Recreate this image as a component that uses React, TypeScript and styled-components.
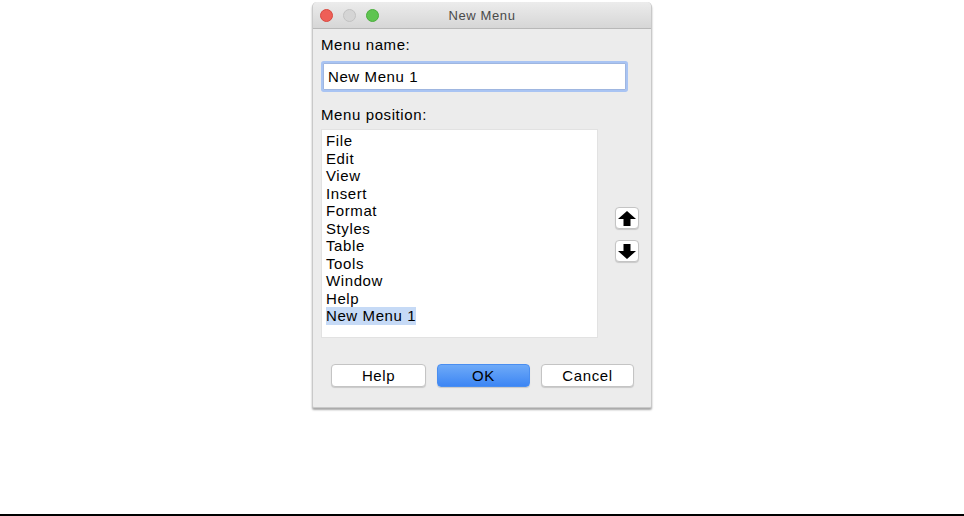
import styled, { createGlobalStyle } from "styled-components";

const GlobalStyle = createGlobalStyle`
    html, body {
        margin: 0;
        padding: 0;
        background: #fff;
    }
    body {
        font-family: "Liberation Sans", Arial, sans-serif;
    }
`;

const Page = styled.div`
    height: 516px;
    border-bottom: 2px solid #000;
    display: flex;
    flex-direction: column;
    align-items: center;
    padding-top: 2px;
    box-sizing: border-box;
    overflow: hidden;
`;

const Window = styled.div`
    width: 340px;
    height: 406px;
    flex-shrink: 0;
    background: #ececec;
    border: 1px solid #c9c9c9;
    border-top: none;
    border-radius: 5px 5px 2px 2px;
    box-sizing: border-box;
    display: flex;
    flex-direction: column;
    box-shadow: 0 2px 2px rgba(0, 0, 0, 0.35);
`;

const TitleBar = styled.div`
    height: 27px;
    flex-shrink: 0;
    display: flex;
    align-items: center;
    padding-left: 7px;
    position: relative;
    background: linear-gradient(#ececec, #d6d6d6);
    border-bottom: 1px solid #b8b8b8;
    border-radius: 5px 5px 0 0;
    box-sizing: border-box;
`;

const Dot = styled.span<{ $color: string; $edge: string }>`
    width: 13px;
    height: 13px;
    border-radius: 50%;
    background: ${(p) => p.$color};
    border: 1px solid ${(p) => p.$edge};
    box-sizing: border-box;
    margin-right: 10px;
`;

const Title = styled.div`
    position: absolute;
    left: 0;
    right: 0;
    text-align: center;
    font-size: 13px;
    letter-spacing: 0.6px;
    color: #4a4a4a;
    pointer-events: none;
`;

const Body = styled.div`
    flex: 1;
    display: flex;
    flex-direction: column;
    padding: 7px 12px 20px 8px;
`;

const Label = styled.div<{ $gap: number }>`
    font-size: 15px;
    letter-spacing: 0.6px;
    line-height: 17px;
    color: #000;
    margin-top: ${(p) => p.$gap}px;
`;

const NameInput = styled.div`
    margin: 10px 13px 0 2px;
    height: 27px;
    box-sizing: border-box;
    background: #fff;
    border: 1px solid #9fb6e0;
    box-shadow: 0 0 0 2px #a9c4f3;
    border-radius: 1px;
    display: flex;
    align-items: center;
    padding-left: 4px;
    font-size: 15px;
    letter-spacing: 0.6px;
    color: #000;
`;

const ListRow = styled.div`
    display: flex;
    align-items: center;
    margin-top: 6px;
`;

const List = styled.div`
    width: 277px;
    height: 209px;
    flex-shrink: 0;
    box-sizing: border-box;
    background: #fff;
    border: 1px solid #e2e2e2;
    padding: 2px 0 0 4px;
    display: flex;
    flex-direction: column;
    align-items: flex-start;
`;

const Item = styled.span<{ $selected?: boolean }>`
    font-size: 15px;
    letter-spacing: 0.6px;
    line-height: 17.5px;
    color: #000;
    background: ${(p) => (p.$selected ? "#c6daf6" : "transparent")};
`;

const ArrowColumn = styled.div`
    display: flex;
    flex-direction: column;
    gap: 11px;
    margin-left: 17px;
    margin-top: 2px;
`;

const ArrowButton = styled.div`
    width: 24px;
    height: 22px;
    box-sizing: border-box;
    background: #fff;
    border: 1px solid #c4c4c4;
    border-radius: 4px;
    box-shadow: 0 1px 1px rgba(0, 0, 0, 0.15);
    display: flex;
    align-items: center;
    justify-content: center;
`;

const ButtonRow = styled.div`
    margin-top: auto;
    display: flex;
    justify-content: space-between;
    padding: 0 5px 0 10px;
`;

const Button = styled.div<{ $primary?: boolean; $w: number }>`
    width: ${(p) => p.$w}px;
    height: 23px;
    box-sizing: border-box;
    border-radius: 4px;
    display: flex;
    align-items: center;
    justify-content: center;
    font-size: 15px;
    letter-spacing: 0.6px;
    color: #000;
    background: ${(p) =>
        p.$primary ? "linear-gradient(#6eaaf8, #3d86f4)" : "#fff"};
    border: 1px solid ${(p) => (p.$primary ? "#4a8ef0" : "#c4c4c4")};
    box-shadow: 0 1px 1px rgba(0, 0, 0, 0.15);
`;

const menuItems = [
    "File",
    "Edit",
    "View",
    "Insert",
    "Format",
    "Styles",
    "Table",
    "Tools",
    "Window",
    "Help",
];

const Arrow = ({ down }: { down?: boolean }) => (
    <svg width="20" height="17" viewBox="0 0 20 17">
        <path
            d="M10 1 L19 9 H13.5 V16 H6.5 V9 H1 Z"
            fill="#000"
            transform={down ? "rotate(180 10 8.5)" : undefined}
        />
    </svg>
);

const App = () => {
    return (
        <>
            <GlobalStyle />
            <Page>
                <Window>
                    <TitleBar>
                        <Dot $color="#ee5f57" $edge="#d9483f" />
                        <Dot $color="#d5d5d5" $edge="#c2c2c2" />
                        <Dot $color="#5fc451" $edge="#4aae3c" />
                        <Title>New Menu</Title>
                    </TitleBar>

                    <Body>
                        <Label $gap={0}>Menu name:</Label>
                        <NameInput>New Menu 1</NameInput>

                        <Label $gap={16}>Menu position:</Label>
                        <ListRow>
                            <List>
                                {menuItems.map((item) => (
                                    <Item key={item}>{item}</Item>
                                ))}
                                <Item $selected>New Menu 1</Item>
                            </List>
                            <ArrowColumn>
                                <ArrowButton>
                                    <Arrow />
                                </ArrowButton>
                                <ArrowButton>
                                    <Arrow down />
                                </ArrowButton>
                            </ArrowColumn>
                        </ListRow>

                        <ButtonRow>
                            <Button $w={95}>Help</Button>
                            <Button $w={93} $primary>OK</Button>
                            <Button $w={93}>Cancel</Button>
                        </ButtonRow>
                    </Body>
                </Window>
            </Page>
        </>
    );
};

export default App;
